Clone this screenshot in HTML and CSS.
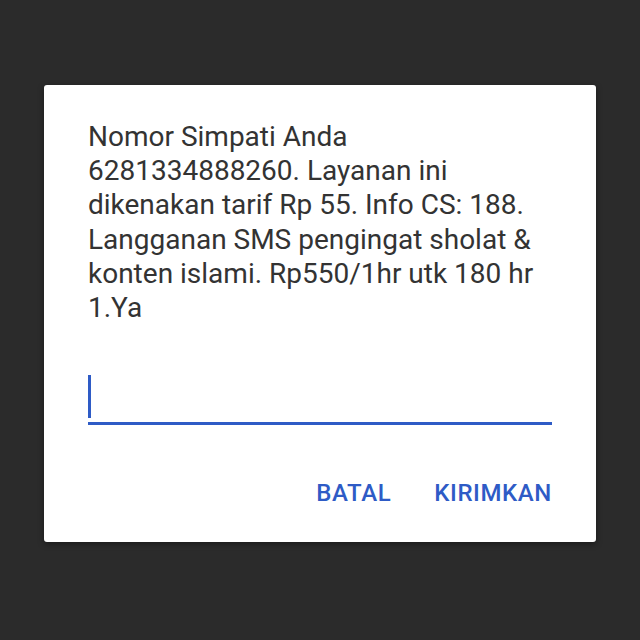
FILE: index.html
```html
<!DOCTYPE html>
<html>
<head>
<meta charset="utf-8">
<link rel="stylesheet" href="styles.css">
</head>
<body>
<div class="dialog">
  <p class="message">Nomor Simpati Anda<br>6281334888260. Layanan ini<br>dikenakan tarif Rp 55. Info CS: 188.<br>Langganan SMS pengingat sholat &amp;<br>konten islami. Rp550/1hr utk 180 hr<br>1.Ya</p>
  <div class="field"><span class="caret"></span></div>
  <div class="actions">
    <span class="btn">BATAL</span>
    <span class="btn">KIRIMKAN</span>
  </div>
</div>
</body>
</html>
```
FILE: styles.css
```css
html, body {
  margin: 0;
  padding: 0;
  background: #2b2b2b;
  width: 640px;
  height: 640px;
}
body {
  padding-top: 85px;
  box-sizing: border-box;
  font-family: Roboto, "Noto Sans", sans-serif;
}
.dialog {
  margin-left: 44px;
  width: 552px;
  height: 457px;
  background: #ffffff;
  border-radius: 3px;
  box-sizing: border-box;
  padding: 35px 44px 0 44px;
  box-shadow: 0 2px 6px rgba(0,0,0,0.4);
}
.message {
  margin: 0;
  width: 500px;
  white-space: nowrap;
  font-size: 28px;
  line-height: 34.2px;
  color: #333333;
}
.field {
  margin-top: 50px;
  height: 47px;
  border-bottom: 3px solid #2e5bc6;
  display: flex;
  align-items: flex-start;
}
.caret {
  display: block;
  width: 3px;
  height: 43px;
  background: #2e5bc6;
}
.actions {
  margin-top: 54px;
  display: flex;
  justify-content: flex-end;
  gap: 43px;
}
.btn {
  font-size: 24px;
  font-weight: 500;
  letter-spacing: 0.6px;
  color: #2e5bc6;
}
```
